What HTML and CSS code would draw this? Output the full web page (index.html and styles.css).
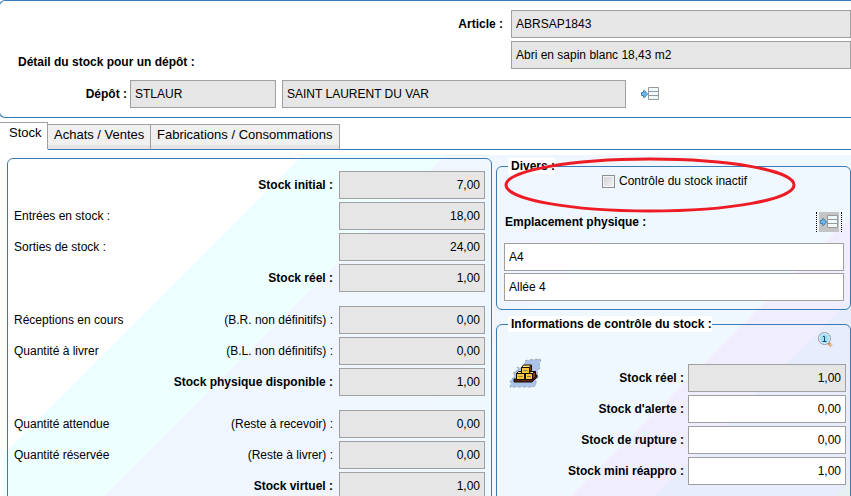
FILE: index.html
```html
<!DOCTYPE html>
<html lang="fr">
<head>
<meta charset="utf-8">
<title>Détail du stock pour un dépôt</title>
<link rel="stylesheet" href="styles.css">
</head>
<body>
<svg class="defs" aria-hidden="true">
  <symbol id="pick" viewBox="0 0 18 14">
    <path d="M0.500 5.500h2v-2h1l3 3.500-3 3.500h-1v-2h-2z" fill="#6fb7e6" stroke="#3f83b5"/>
    <path d="M7.500 0.500h10v12h-10z" fill="#eef9fb" stroke="#999"/>
    <path d="M8 4.500h9M8 8.500h9" stroke="#999"/>
  </symbol>
</svg>
<header class="head">
  <div class="article">
    <label for="art">Article :</label>
    <input id="art" class="field locked" readonly value="ABRSAP1843">
    <input class="field locked second" aria-label="Désignation" readonly value="Abri en sapin blanc 18,43 m2">
  </div>
  <h1>Détail du stock pour un dépôt :</h1>
  <div class="depot">
    <label for="dep">Dépôt :</label>
    <input id="dep" class="field locked code" readonly value="STLAUR">
    <input class="field locked name" aria-label="Nom du dépôt" readonly value="SAINT LAURENT DU VAR">
    <button class="pick" type="button" aria-label="Choisir un dépôt"><svg width="18" height="14"><use href="#pick"/></svg></button>
  </div>
</header>

<nav class="tabs">
  <button type="button" class="tab active">Stock</button>
  <button type="button" class="tab">Achats / Ventes</button>
  <button type="button" class="tab">Fabrications / Consommations</button>
</nav>

<main class="content">
  <section class="panel stock">
    <div class="group">
      <div class="row"><label class="total" for="s1">Stock initial :</label><input id="s1" class="field locked num" readonly value="7,00"></div>
      <div class="row"><label for="s2">Entrées en stock :</label><input id="s2" class="field locked num" readonly value="18,00"></div>
      <div class="row"><label for="s3">Sorties de stock :</label><input id="s3" class="field locked num" readonly value="24,00"></div>
      <div class="row"><label class="total" for="s4">Stock réel :</label><input id="s4" class="field locked num" readonly value="1,00"></div>
    </div>
    <div class="group">
      <div class="row"><label for="s5"><span>Réceptions en cours</span><span>(B.R. non définitifs) :</span></label><input id="s5" class="field locked num" readonly value="0,00"></div>
      <div class="row"><label for="s6"><span>Quantité à livrer</span><span>(B.L. non définitifs) :</span></label><input id="s6" class="field locked num" readonly value="0,00"></div>
      <div class="row"><label class="total" for="s7">Stock physique disponible :</label><input id="s7" class="field locked num" readonly value="1,00"></div>
    </div>
    <div class="group">
      <div class="row"><label for="s8"><span>Quantité attendue</span><span>(Reste à recevoir) :</span></label><input id="s8" class="field locked num" readonly value="0,00"></div>
      <div class="row"><label for="s9"><span>Quantité réservée</span><span>(Reste à livrer) :</span></label><input id="s9" class="field locked num" readonly value="0,00"></div>
      <div class="row"><label class="total" for="s10">Stock virtuel :</label><input id="s10" class="field locked num" readonly value="1,00"></div>
    </div>
  </section>

  <div class="side">
    <fieldset class="panel divers">
      <legend>Divers :</legend>
      <label class="check"><input type="checkbox">Contrôle du stock inactif</label>
      <div class="place">
        <label for="emp">Emplacement physique :</label>
        <button class="pick focused" type="button" aria-label="Choisir un emplacement"><svg width="18" height="14"><use href="#pick"/></svg></button>
      </div>
      <div class="places">
        <input id="emp" class="field" value="A4">
        <input class="field" aria-label="Allée" value="Allée 4">
      </div>
      <svg class="mark" viewBox="0 0 292 56" aria-hidden="true"><ellipse cx="146" cy="28" rx="144" ry="26" fill="none" stroke="#ed1c24" stroke-width="3"/></svg>
    </fieldset>

    <fieldset class="panel infos">
      <legend>Informations de contrôle du stock :</legend>
      <button class="zoom" type="button" aria-label="Détail">
        <svg width="16" height="16" viewBox="0 0 16 16">
          <path d="M10.500 11l3 3" stroke="#d08a4a" stroke-width="3"/>
          <path d="M12 12l1.500 1.500" stroke="#f7cf9a" stroke-width="2"/>
          <circle cx="6.500" cy="6.500" r="6" fill="#dff2fd" stroke="#8f97a8"/>
          <circle cx="6.500" cy="6.500" r="4.500" fill="#9fdcf5"/>
          <path d="M5 4.500h1.500v5M4.500 9.500h4" fill="none" stroke="#174f63"/>
        </svg>
      </button>
      <div class="levels">
        <svg class="boxes" width="34" height="30" viewBox="0 0 34 30" aria-hidden="true">
          <path d="M16 3l3-1 12-1 1 2-2 2 1 5-3 3 1 6-2 3v5l-3 2H1l1-4-1-2 4-4v-5l4-2-1-3 2 1 6-1z" fill="#abc3e8" stroke="#9ba9b3" stroke-dasharray="3 2"/>
          <path d="M5 21h17l4-4h2v2l-5 5H5z" fill="#5b2408" stroke="#120800"/>
          <path d="M7.500 15.500h8v6h-8zM16.500 15.500h7v6h-7zM12.500 9.500h8v6h-8z" fill="#fbc736" stroke="#140c00"/>
          <path d="M12.500 9.500l2-2.500h8l-2 2.500zM7.500 15.500l2-2h3v2zM20.500 13.500h6l-3 2h-3z" fill="#ffe27a" stroke="#140c00"/>
          <path d="M20.500 9.500l2-2.500v5l-2 3zM23.500 15.500l3-2v5l-3 3z" fill="#8a3f0c" stroke="#140c00"/>
          <path d="M9.500 18.500h4M18 18.500h4M14.500 12.500h4" stroke="#8b7c5a"/>
        </svg>
        <div class="group">
          <div class="row"><label for="i1">Stock réel :</label><input id="i1" class="field locked num" readonly value="1,00"></div>
          <div class="row"><label for="i2">Stock d'alerte :</label><input id="i2" class="field num" value="0,00"></div>
          <div class="row"><label for="i3">Stock de rupture :</label><input id="i3" class="field num" value="0,00"></div>
          <div class="row"><label for="i4">Stock mini réappro :</label><input id="i4" class="field num" value="1,00"></div>
        </div>
      </div>
    </fieldset>
  </div>
</main>
</body>
</html>
```
FILE: styles.css
```css
* { box-sizing: border-box; }

body {
  margin: 0;
  height: 100vh;
  overflow: hidden;
  background: #fff;
  color: #000;
  font: 12px/16px "Liberation Sans", Arial, sans-serif;
}

button, input { font: inherit; color: inherit; }
button { padding: 0; border: 0; background: none; }
button svg { display: block; }
.defs { display: none; }

.field {
  min-width: 0;
  height: 28px;
  padding: 0 4px;
  border: 1px solid #a0a0a0;
  border-radius: 0;
  background: #fff;
}
.locked { background: #e6e6e6; }
.num { text-align: right; }

.panel {
  min-width: 0;
  margin: 0;
  border: 1px solid #3a7ab5;
  border-radius: 6px;
}

/* Header */
.head {
  height: 118px;
  margin-left: -1px;
  padding: 9px 0 0 18px;
  border: 1px solid #3a7ab5;
  border-right: 0;
  border-radius: 6px 0 0 6px;
  font-weight: bold;
}
.head .field { font-weight: normal; }
.article {
  display: grid;
  grid-template-columns: 1fr 340px;
  gap: 3px 8px;
  align-items: center;
}
.article label { text-align: right; }
.second { grid-column: 2; }
h1 { margin: -15px 0 0; font-size: 12px; line-height: 16px; width: 240px; }
.depot { display: flex; align-items: center; margin-top: 10px; }
.depot label { width: 109px; text-align: right; margin-right: 3px; }
.code { width: 146px; margin-right: 6px; }
.name { width: 344px; margin-right: 12px; }

/* Tabs */
.tabs { display: flex; align-items: flex-end; height: 28px; margin-top: 4px; }
.tab {
  height: 26px;
  padding: 0 0 4px 6px;
  border: solid #a0a0a0;
  border-width: 1px 1px 0 0;
  border-bottom: 1px solid #3a7ab5;
  background: linear-gradient(#f0f0f0 85%, #e4e4e4 85%);
  font-size: 13px;
  text-align: left;
  white-space: nowrap;
}
.tab:nth-child(2) { width: 103px; }
.tab:nth-child(3) { width: 189px; }
.tab.active {
  width: 48px;
  height: 28px;
  padding: 0 0 6px 9px;
  border-bottom-color: #fff;
  background: #fff;
}
.tabs::after { content: ""; flex: 1; border-bottom: 1px solid #3a7ab5; }

/* Content */
.content {
  display: grid;
  grid-template-columns: 485px 1fr;
  gap: 4px;
  margin: 5px 0 0 3px;
  padding: 3px 0 0 4px;
  background: linear-gradient(135deg, #fff 212px, #eff 212px, #eff 313px, #eff6ff 313px, #eff6ff 480px, #eff8ff 480px, #eff8ff 643px, #f0edfe 643px, #f0edfe 701px, #e7edfc 701px, #e7edfc 829px, #e8f1f1 829px);
}
.stock {
  display: flex;
  flex-direction: column;
  gap: 14px;
  padding: 12px 6px;
}
.group { display: grid; gap: 3px; }
.row { display: flex; align-items: center; }
.row label { flex: 1; }
.row .total { text-align: right; font-weight: bold; }
.stock .row label { display: flex; justify-content: space-between; margin-right: 6px; }
.stock .row .total { justify-content: flex-end; }
.stock .num { width: 146px; }

.side { display: flex; flex-direction: column; gap: 6px; }
.side legend {
  height: 16px;
  margin-left: 4px;
  padding: 0 0 0 3px;
  background: #fff;
  font-weight: bold;
}
.divers { position: relative; height: 152px; padding: 0 6px 0 7px; }
.check { display: flex; align-items: center; gap: 4px; margin: -1px 0 0 98px; }
.check input {
  appearance: none;
  width: 13px;
  height: 13px;
  margin: 0;
  border: 1px solid #8e8f8f;
  background: linear-gradient(135deg, #cbcfd5, #f6f6f6);
  box-shadow: inset 0 0 0 1px #f4f4f4;
}
.place {
  display: flex;
  justify-content: space-between;
  align-items: center;
  margin: 23px 2px 0 1px;
  font-weight: bold;
}
.pick { padding: 3px; }
.focused {
  padding: 0 2px;
  border: dotted #000;
  border-width: 0 1px;
  background: #c4c4c4 content-box;
}
.focused svg { margin: 3px 1px; }
.places { display: grid; gap: 2px; margin-top: 11px; }
.mark { position: absolute; left: 7px; top: -17px; width: 292px; height: 56px; pointer-events: none; }

.infos { flex: 1; padding: 0 4px 0 7px; }
.zoom { display: block; margin: 0 12px 0 auto; }
.levels { display: flex; align-items: flex-start; margin-top: 16px; }
.boxes { margin: -6px 0 0 5px; }
.levels .group { flex: 1; }
.levels .row label { text-align: right; margin-right: 4px; font-weight: bold; }
.levels .num { width: 158px; }
```
